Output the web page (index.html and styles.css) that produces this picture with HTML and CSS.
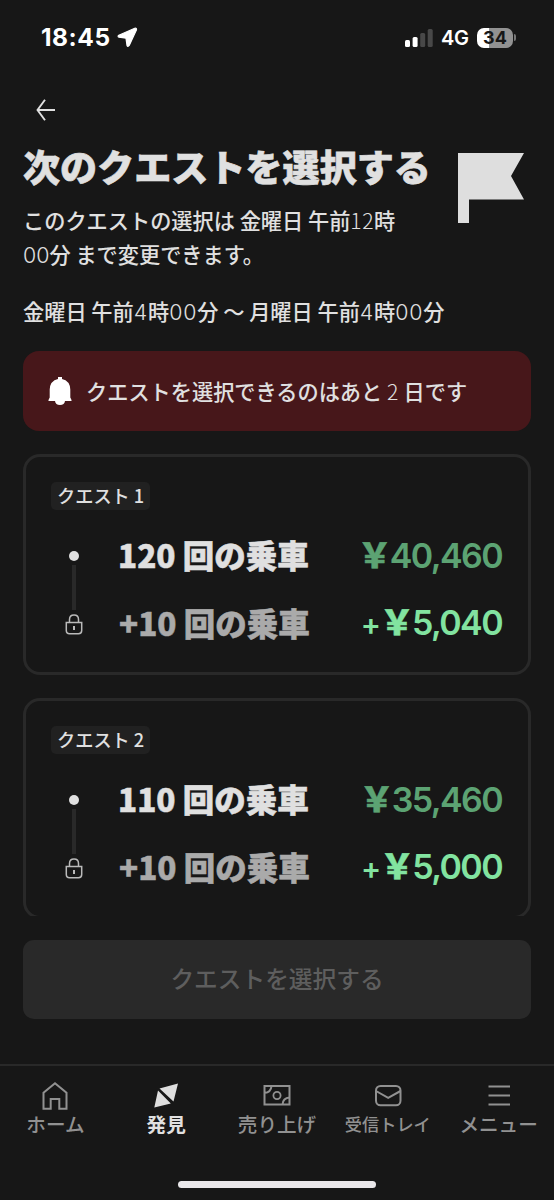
FILE: index.html
```html
<!DOCTYPE html>
<html lang="ja">
<head>
<meta charset="utf-8">
<title>クエスト</title>
<link rel="stylesheet" href="styles.css">
</head>
<body>
<div class="screen">
  <div class="status">
    <span class="time">18:45</span>
    <svg class="loc" width="21" height="21" viewBox="0 0 21 21"><path d="M17.800 1.300 1.800 8.300Q.3 9.500 2 10.200L9 11.200 10 18.500Q10.800 20.300 12.200 18.500L19.500 2.700Q19.800 .7 17.800 1.300Z" fill="#fff" stroke="#fff" stroke-width="1.200" stroke-linejoin="round"/></svg>
    <svg class="signal" width="28" height="18" viewBox="0 0 28 18"><rect x="0" y="11" width="5" height="7" rx="1.500" fill="#fff"/><rect x="7.600" y="8" width="5" height="10" rx="1.500" fill="#fff"/><rect x="15.200" y="4" width="5" height="14" rx="1.500" fill="#484848"/><rect x="22.700" y="0" width="5" height="18" rx="1.500" fill="#484848"/></svg>
    <span class="net">4G</span>
    <span class="battery">34</span><span class="cap"></span>
  </div>
  <main class="content">
    <div class="back"><svg width="20" height="22" viewBox="0 0 20 22"><path d="M9 .8 1.500 11 9 21.200M1.500 11H19" fill="none" stroke="#e0e0e0" stroke-width="1.900"/></svg></div>
    <header class="head">
      <div>
        <h1 class="title">次のクエストを選択する</h1>
        <p class="desc">このクエストの選択は 金曜日 午前<span class="thin">12</span>時<br><span class="thin wide">00</span>分 まで変更できます。</p>
      </div>
      <svg class="flag" width="66" height="70" viewBox="0 0 66 70"><path d="M0 0H66L53 23 66 46.500H11V70H0Z" fill="#dedede"/></svg>
    </header>
    <p class="period">金曜日 午前<span class="thin wide">4</span>時<span class="thin wide">00</span>分 〜 月曜日 午前<span class="thin wide">4</span>時<span class="thin wide">00</span>分</p>
    <div class="alert">
      <svg width="24" height="28" viewBox="0 0 24 28"><path d="M10 0H14V2.100Q22 4 22.300 12.500V20.500L23.500 23V24H17Q16.500 28 12 28 7.500 28 7 24H.5V23L1.700 20.500V12.500Q2 4 10 2.100Z" fill="#fff"/></svg>
      <span class="alert-text">クエストを選択できるのはあと <span class="thin">2</span> 日です</span>
    </div>
    <section class="card">
      <span class="tag">クエスト 1</span>
      <div class="step"><i class="dot"></i><b class="rides">120 回の乗車</b><b class="price"><span class="yen">￥</span>40,460</b></div>
      <div class="link"></div>
      <div class="step locked"><svg class="lock" width="18" height="21" viewBox="0 0 18 21"><path d="M4.500 8.500V5.500Q4.500 1 9 1T13.500 5.500V8.500M1.300 8.500H16.700V16.500Q16.700 19.700 13.500 19.700H4.500Q1.300 19.700 1.300 16.500Z" fill="none" stroke="#bababa" stroke-width="1.500"/><path d="M8 12H10V16H8Z" fill="#bababa"/></svg><b class="rides">+10 回の乗車</b><b class="price"><span class="plus">+</span><span class="yen">￥</span>5,040</b></div>
    </section>
    <section class="card">
      <span class="tag">クエスト 2</span>
      <div class="step"><i class="dot"></i><b class="rides">110 回の乗車</b><b class="price"><span class="yen">￥</span>35,460</b></div>
      <div class="link"></div>
      <div class="step locked"><svg class="lock" width="18" height="21" viewBox="0 0 18 21"><path d="M4.500 8.500V5.500Q4.500 1 9 1T13.500 5.500V8.500M1.300 8.500H16.700V16.500Q16.700 19.700 13.500 19.700H4.500Q1.300 19.700 1.300 16.500Z" fill="none" stroke="#bababa" stroke-width="1.500"/><path d="M8 12H10V16H8Z" fill="#bababa"/></svg><b class="rides">+10 回の乗車</b><b class="price"><span class="plus">+</span><span class="yen">￥</span>5,000</b></div>
    </section>
  </main>
  <div class="action"><button class="select">クエストを選択する</button></div>
  <nav class="nav">
    <div class="item"><svg width="28" height="30" viewBox="0 0 28 30"><path d="M2.500 27.800V11.800L14 2.200 25.500 11.800V27.800H18.300V18H9.700V27.800Z" fill="none" stroke="#919191" stroke-width="2"/></svg><span>ホーム</span></div>
    <div class="item on"><svg width="28" height="30" viewBox="0 0 28 30"><path d="M7.500 7.500 26 2.500 21.500 20.500ZM6 9.500 18.800 22.400 2.300 26.500Z" fill="#dedede"/></svg><span>発見</span></div>
    <div class="item"><svg width="28" height="30" viewBox="0 0 28 30"><path d="M1.500 5H26.500V23.500H1.500ZM1.500 12Q8 11.500 8.500 5M26.500 16.500Q20 17 19.500 23.500" fill="none" stroke="#919191" stroke-width="2"/><circle cx="14" cy="14.500" r="3.600" fill="none" stroke="#919191" stroke-width="1.800"/></svg><span>売り上げ</span></div>
    <div class="item small"><svg width="28" height="30" viewBox="0 0 28 30"><rect x="2" y="5" width="24.500" height="19.300" rx="4.500" fill="none" stroke="#919191" stroke-width="2"/><path d="M2 10 14.200 16.800 26.500 10" fill="none" stroke="#919191" stroke-width="2"/></svg><span>受信トレイ</span></div>
    <div class="item"><svg width="28" height="30" viewBox="0 0 28 30"><path d="M3.500 5.500H25M3.500 14.500H25M3.500 23.500H25" stroke="#919191" stroke-width="2"/></svg><span>メニュー</span></div>
  </nav>
  <div class="home"></div>
</div>
</body>
</html>
```

FILE: styles.css
```css
* { box-sizing: border-box; }
body { margin: 0; background: #171717; color: #e0e0e0; font-family: "Noto Sans CJK JP", sans-serif; }
.screen { width: 554px; height: 1200px; display: flex; flex-direction: column; overflow: hidden; background: #171717; }
.status { height: 75px; flex: none; display: flex; align-items: center; padding: 0 37px 0 41px; font-family: Inter, sans-serif; color: #fff; }
.time { font-size: 24.5px; font-weight: 700; line-height: 30px; width: 76px; letter-spacing: 0.55px; white-space: nowrap; padding-bottom: 1px; }
.signal { margin-left: 267px; }
.net { font-size: 20px; font-weight: 600; margin-left: 8px; width: 29px; letter-spacing: -0.3px; }
.battery { width: 36px; height: 20px; margin-left: 7px; border-radius: 7px; background: linear-gradient(90deg, #fff 34%, #929292 34%); color: #171717; font-size: 18px; font-weight: 700; line-height: 19px; text-align: center; }
.cap { width: 2px; height: 7px; margin-left: 1px; background: #777; border-radius: 0 2px 2px 0; }
.content { height: 841px; flex: none; overflow: hidden; padding: 0 23px; }
.back { height: 67px; padding: 24px 0 0 13px; }
.back svg, .item svg { display: block; }
.head { display: flex; height: 129px; justify-content: space-between; padding-right: 7px; }
.title { margin: 0; font-size: 37.1px; line-height: 48px; font-weight: 900; white-space: nowrap; -webkit-text-stroke: 0.6px currentColor; }
.desc { margin: 13px 0 0; font-size: 21.2px; line-height: 34px; font-weight: 500; white-space: nowrap; }
.thin { font-weight: 300; letter-spacing: 0.5px; }
.wide { font-family: Inter, sans-serif; letter-spacing: 0; font-size: 21.4px; line-height: 1; }
.period .wide { letter-spacing: 0.8px; }
.flag { margin-top: 11px; }
.period { margin: 23px 0 0; height: 34px; font-size: 21.2px; line-height: 34px; font-weight: 500; white-space: nowrap; }
.alert { height: 80px; margin-top: 23px; border-radius: 16px; background: #47171a; display: flex; align-items: center; gap: 14px; padding-left: 25px; font-size: 21.2px; font-weight: 500; white-space: nowrap; }
.alert-text { padding-bottom: 2px; }
.card { height: 221px; margin-top: 23px; padding: 25px 26px 0 25px; border: 3px solid #292929; border-radius: 17px; }
.tag { display: block; width: max-content; height: 28px; padding: 0 6px; border-radius: 5px; background: #212121; font-size: 18.2px; line-height: 27px; font-weight: 500; }
.step { display: flex; align-items: center; height: 44px; margin-top: 24px; white-space: nowrap; }
.dot { width: 10px; height: 10px; flex: none; margin: 0 39px 0 18px; border-radius: 50%; background: #e0e0e0; }
.lock { flex: none; margin: 0 36px 0 14px; }
.rides { padding-bottom: 4px; font-size: 31.5px; font-weight: 900; -webkit-text-stroke: 0.5px currentColor; }
.locked .rides { color: #aaa; }
.price { display: flex; align-items: baseline; margin-left: auto; padding-bottom: 1px; font-family: Inter, sans-serif; font-size: 34px; line-height: 42px; font-weight: 600; color: #5ca373; letter-spacing: -1.6px; }
.locked .price { color: #82e3a0; }
.yen { font-family: "Noto Sans CJK JP", sans-serif; font-weight: 900; font-size: 34px; line-height: 1; letter-spacing: 0; margin: 0 -2px 0 -3px; -webkit-text-stroke: 0.5px currentColor; }
.plus { font-size: 30px; letter-spacing: 0; margin-right: 2px; }
.link { width: 4px; height: 45px; margin: -13px 0 -8px 21px; background: #292929; }
.link + .step { margin-top: 0; }
.action { height: 148px; flex: none; padding: 24px 23px 0; }
.select { display: block; width: 508px; height: 79px; border: 0; border-radius: 11px; background: #292929; color: #5e5e5e; font: 500 23.7px "Noto Sans CJK JP", sans-serif; padding: 0 0 3px; }
.nav { height: 117px; flex: none; border-top: 2px solid #292929; display: grid; grid-template-columns: repeat(5, 1fr); padding-top: 15px; }
.item { display: flex; flex-direction: column; align-items: center; color: #919191; font-size: 19.6px; line-height: 26px; font-weight: 500; white-space: nowrap; }
.item.on { color: #e0e0e0; font-weight: 700; }
.item.small { font-size: 17.2px; }
.home { flex: none; width: 198px; height: 7px; margin-left: 178px; border-radius: 4px; background: #e9e7ea; }
```
